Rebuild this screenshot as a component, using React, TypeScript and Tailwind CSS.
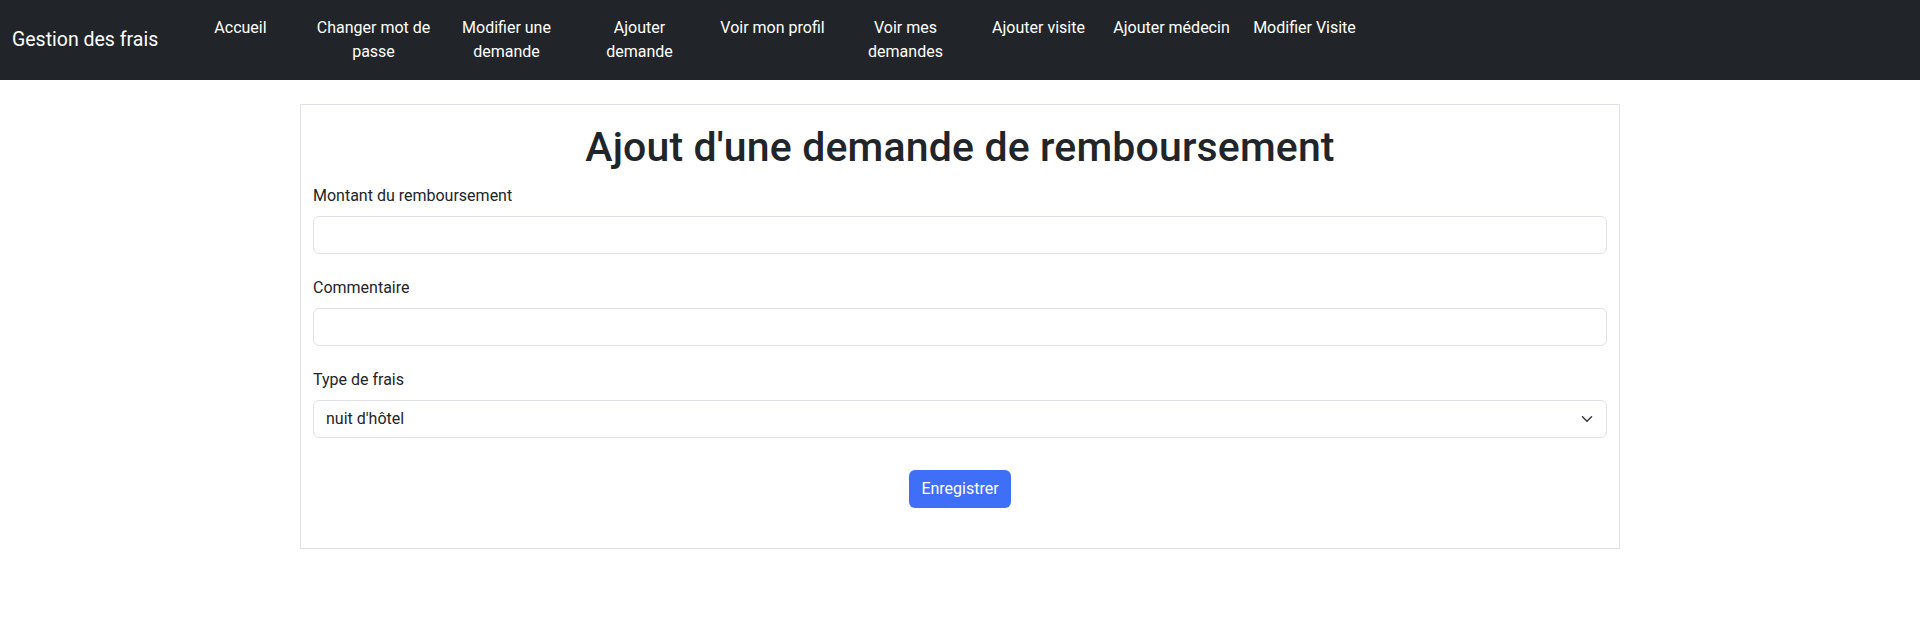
import { useState } from "react";

const navItems = [
  "Accueil",
  "Changer mot de passe",
  "Modifier une demande",
  "Ajouter demande",
  "Voir mon profil",
  "Voir mes demandes",
  "Ajouter visite",
  "Ajouter médecin",
  "Modifier Visite",
];

export default function App() {
  const [montant, setMontant] = useState("");
  const [commentaire, setCommentaire] = useState("");
  const [typeFrais, setTypeFrais] = useState("nuit d'hôtel");

  return (
    <div className="min-h-screen bg-white text-[#212529] font-['Roboto',sans-serif]">
      <nav className="h-[80px] bg-[#212529] flex items-center px-3 py-2">
        <a
          href="#"
          className="mr-4 w-[146px] whitespace-nowrap text-[19.5px] leading-[30px] py-[5px] text-white"
        >
          Gestion des frais
        </a>
        <ul className="flex self-start">
          {navItems.map((item) => (
            <li key={item}>
              <a
                href="#"
                className="block w-[133px] px-2 py-2 text-center text-[16px] leading-6 text-white"
              >
                {item}
              </a>
            </li>
          ))}
        </ul>
      </nav>

      <main className="mx-auto mt-6 w-[1320px] border border-[#dee2e6] px-3 pt-[18px] pb-[40px]">
        <h1 className="mb-[13px] text-center text-[41px] leading-[48px] tracking-[0.15px] font-medium">
          Ajout d'une demande de remboursement
        </h1>
        <form onSubmit={(e) => e.preventDefault()}>
          <div className="mb-[22px]">
            <label className="mb-2 block text-[16px] leading-6">Montant du remboursement</label>
            <input
              type="text"
              value={montant}
              onChange={(e) => setMontant(e.target.value)}
              className="block h-[38px] w-full rounded-[6px] border border-[#dee2e6] px-3 text-[16px] outline-none"
            />
          </div>
          <div className="mb-[22px]">
            <label className="mb-2 block text-[16px] leading-6">Commentaire</label>
            <input
              type="text"
              value={commentaire}
              onChange={(e) => setCommentaire(e.target.value)}
              className="block h-[38px] w-full rounded-[6px] border border-[#dee2e6] px-3 text-[16px] outline-none"
            />
          </div>
          <div className="mb-8">
            <label className="mb-2 block text-[16px] leading-6">Type de frais</label>
            <div className="relative">
              <select
                value={typeFrais}
                onChange={(e) => setTypeFrais(e.target.value)}
                className="block h-[38px] w-full appearance-none rounded-[6px] border border-[#dee2e6] bg-white pl-3 pr-9 text-[16px] text-[#212529] outline-none"
              >
                <option>nuit d'hôtel</option>
                <option>repas</option>
                <option>transport</option>
              </select>
              <svg
                className="pointer-events-none absolute right-3 top-[13px]"
                width="16"
                height="12"
                viewBox="0 0 16 16"
                fill="none"
                stroke="#343a40"
                strokeWidth="2"
                strokeLinecap="round"
                strokeLinejoin="round"
              >
                <path d="m2 5 6 6 6-6" />
              </svg>
            </div>
          </div>
          <div className="flex justify-center">
            <button
              type="submit"
              className="h-[38px] rounded-[6px] bg-[#3f6ff6] px-3 text-[16px] text-white"
            >
              Enregistrer
            </button>
          </div>
        </form>
      </main>
    </div>
  );
}
